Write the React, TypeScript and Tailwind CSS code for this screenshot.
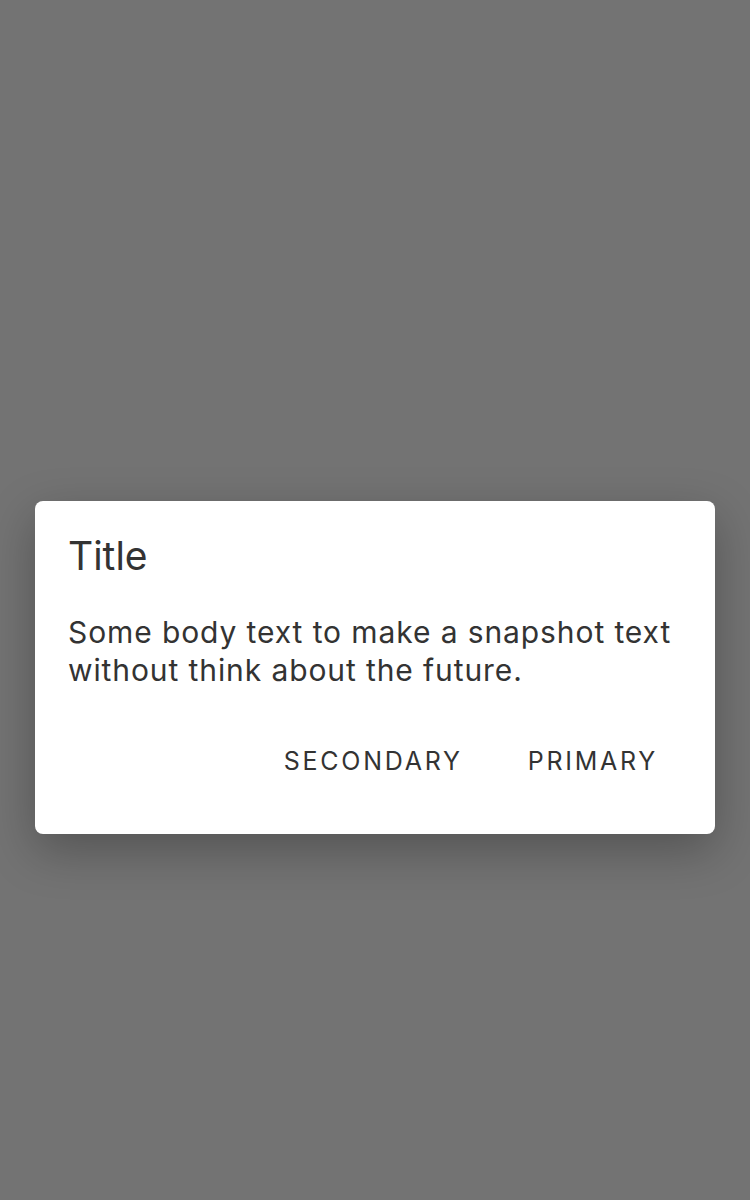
export default function App() {
  return (
    <div className="w-[750px] h-[1200px] bg-[#737373] flex items-center justify-center font-['Inter',sans-serif] text-[#333333]">
      <div className="w-[680px] bg-white rounded-[8px] shadow-[0_16px_48px_rgba(0,0,0,0.28)] pt-[31px] pb-[51px] pl-[33px] pr-[41px] mt-[134px]">
        <h2 className="text-[39px] leading-[48px] font-normal">Title</h2>
        <p className="mt-[33px] text-[30px] leading-[38px] tracking-[0.9px]">
          Some body text to make a snapshot text without think about the future.
        </p>
        <div className="mt-[50px] flex justify-end gap-[33px]">
          <button className="px-[16px] py-[6px] text-[25px] leading-[32px] tracking-[2.75px] uppercase">
            Secondary
          </button>
          <button className="px-[16px] py-[6px] text-[25px] leading-[32px] tracking-[2.75px] uppercase">
            Primary
          </button>
        </div>
      </div>
    </div>
  );
}
